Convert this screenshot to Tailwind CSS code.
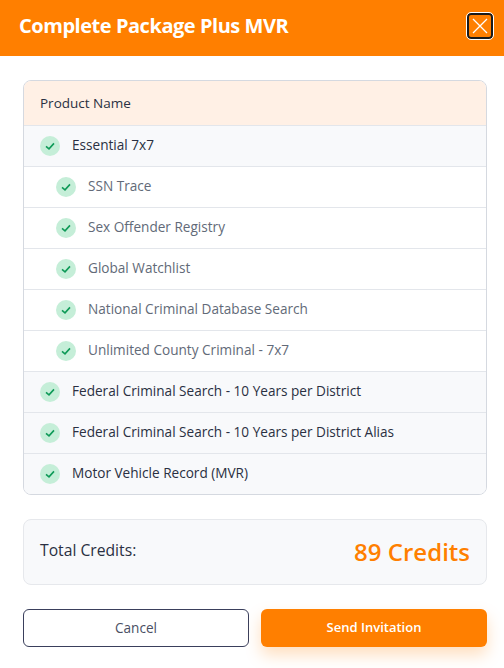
<!DOCTYPE html>
<html lang="en">
<head>
    <meta charset="UTF-8">
    <title>Complete Package Plus MVR</title>
    <script src="https://cdn.jsdelivr.net/npm/@tailwindcss/browser@4"></script>
</head>
<body class="bg-white font-['Open_Sans',sans-serif] h-[668px] overflow-hidden">
    <!-- Header -->
    <div class="h-14 bg-[#ff7f00] flex items-center justify-between pl-[19px] pr-[11px]">
        <h1 class="text-[20px] font-bold text-white tracking-[-0.46px] mb-[4px]">Complete Package Plus MVR</h1>
        <button class="w-[26px] h-[26px] mb-[4px] rounded-[4px] border-2 border-[#1a1a1a] outline outline-1 outline-white flex items-center justify-center">
            <svg width="18" height="18" viewBox="0 0 18 18" fill="none" stroke="white" stroke-width="1.3"><path d="M2 2L16 16M16 2L2 16"/></svg>
        </button>
    </div>

    <div class="pl-[23px] pr-[17px] pt-6">
        <!-- Products -->
        <div class="border border-[#d5d9e0] rounded-lg overflow-hidden text-[13.6px]">
            <div class="h-[44px] bg-[#fff0e5] flex items-center pl-4 pt-[1px] font-medium text-[13.5px] text-[#2a3042]">Product Name</div>
            <div class="h-[41px] border-t border-[#e3e6eb] bg-[#f8f9fb] flex items-center pl-4 gap-3 text-[#2a3042]">
                <span class="w-5 h-5 rounded-full bg-[#c5eed8] flex items-center justify-center"><svg width="10" height="10" viewBox="0 0 10 10" fill="none" stroke="#0f9a58" stroke-width="1.6"><path d="M1 5.3L4 7.8L9 2.4"/></svg></span>
                <span class="pb-[2px]">Essential 7x7</span>
            </div>
            <div class="h-[41px] border-t border-[#e3e6eb] bg-white flex items-center pl-8 gap-3 text-[#626a78]">
                <span class="w-5 h-5 rounded-full bg-[#c5eed8] flex items-center justify-center"><svg width="10" height="10" viewBox="0 0 10 10" fill="none" stroke="#0f9a58" stroke-width="1.6"><path d="M1 5.3L4 7.8L9 2.4"/></svg></span>
                <span class="pb-[2px]">SSN Trace</span>
            </div>
            <div class="h-[41px] border-t border-[#e3e6eb] bg-white flex items-center pl-8 gap-3 text-[#626a78]">
                <span class="w-5 h-5 rounded-full bg-[#c5eed8] flex items-center justify-center"><svg width="10" height="10" viewBox="0 0 10 10" fill="none" stroke="#0f9a58" stroke-width="1.6"><path d="M1 5.3L4 7.8L9 2.4"/></svg></span>
                <span class="pb-[2px]">Sex Offender Registry</span>
            </div>
            <div class="h-[41px] border-t border-[#e3e6eb] bg-white flex items-center pl-8 gap-3 text-[#626a78]">
                <span class="w-5 h-5 rounded-full bg-[#c5eed8] flex items-center justify-center"><svg width="10" height="10" viewBox="0 0 10 10" fill="none" stroke="#0f9a58" stroke-width="1.6"><path d="M1 5.3L4 7.8L9 2.4"/></svg></span>
                <span class="pb-[2px]">Global Watchlist</span>
            </div>
            <div class="h-[41px] border-t border-[#e3e6eb] bg-white flex items-center pl-8 gap-3 text-[#626a78]">
                <span class="w-5 h-5 rounded-full bg-[#c5eed8] flex items-center justify-center"><svg width="10" height="10" viewBox="0 0 10 10" fill="none" stroke="#0f9a58" stroke-width="1.6"><path d="M1 5.3L4 7.8L9 2.4"/></svg></span>
                <span class="pb-[2px]">National Criminal Database Search</span>
            </div>
            <div class="h-[41px] border-t border-[#e3e6eb] bg-white flex items-center pl-8 gap-3 text-[#626a78]">
                <span class="w-5 h-5 rounded-full bg-[#c5eed8] flex items-center justify-center"><svg width="10" height="10" viewBox="0 0 10 10" fill="none" stroke="#0f9a58" stroke-width="1.6"><path d="M1 5.3L4 7.8L9 2.4"/></svg></span>
                <span class="pb-[2px]">Unlimited County Criminal - 7x7</span>
            </div>
            <div class="h-[41px] border-t border-[#e3e6eb] bg-[#f8f9fb] flex items-center pl-4 gap-3 text-[#2a3042]">
                <span class="w-5 h-5 rounded-full bg-[#c5eed8] flex items-center justify-center"><svg width="10" height="10" viewBox="0 0 10 10" fill="none" stroke="#0f9a58" stroke-width="1.6"><path d="M1 5.3L4 7.8L9 2.4"/></svg></span>
                <span class="pb-[2px]">Federal Criminal Search - 10 Years per District</span>
            </div>
            <div class="h-[41px] border-t border-[#e3e6eb] bg-[#f8f9fb] flex items-center pl-4 gap-3 text-[#2a3042]">
                <span class="w-5 h-5 rounded-full bg-[#c5eed8] flex items-center justify-center"><svg width="10" height="10" viewBox="0 0 10 10" fill="none" stroke="#0f9a58" stroke-width="1.6"><path d="M1 5.3L4 7.8L9 2.4"/></svg></span>
                <span class="pb-[2px]">Federal Criminal Search - 10 Years per District Alias</span>
            </div>
            <div class="h-[41px] border-t border-[#e3e6eb] bg-[#f8f9fb] flex items-center pl-4 gap-3 text-[#2a3042]">
                <span class="w-5 h-5 rounded-full bg-[#c5eed8] flex items-center justify-center"><svg width="10" height="10" viewBox="0 0 10 10" fill="none" stroke="#0f9a58" stroke-width="1.6"><path d="M1 5.3L4 7.8L9 2.4"/></svg></span>
                <span class="pb-[2px]">Motor Vehicle Record (MVR)</span>
            </div>
        </div>

        <!-- Total -->
        <div class="mt-6 h-[66px] border border-[#e6e8ec] rounded-lg bg-[#f8f9fb] flex items-center justify-between pl-4 pr-[16px]">
            <span class="text-[15.7px] font-medium text-[#2a3042] pb-[2px]">Total Credits:</span>
            <span class="text-[24px] font-semibold text-[#ff7f00]">89 Credits</span>
        </div>

        <!-- Buttons -->
        <div class="mt-6 grid grid-cols-2 gap-3">
            <button class="h-[38px] border border-[#3a3f5c] rounded-md bg-white text-[13.6px] font-medium text-[#4a4f63]">Cancel</button>
            <button class="h-[38px] rounded-md bg-[#ff7f00] text-[13px] font-semibold text-white shadow-[0_8px_16px_rgba(255,127,0,0.25)]">Send Invitation</button>
        </div>
    </div>
</body>
</html>
